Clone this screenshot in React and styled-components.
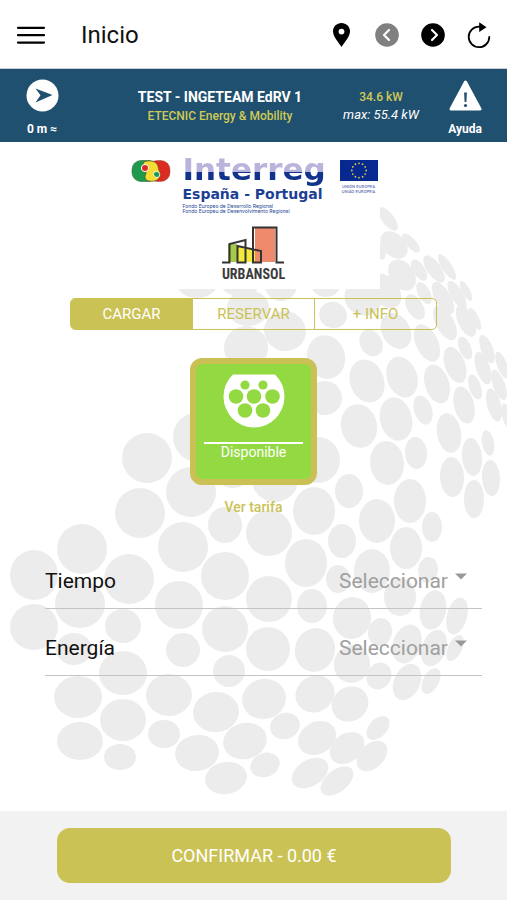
import React, { useState } from "react";
import styled, { createGlobalStyle } from "styled-components";

const GlobalStyle = createGlobalStyle`
  * {
    box-sizing: border-box;
  }
  body {
    margin: 0;
    background: #fff;
    font-family: Roboto, "Liberation Sans", sans-serif;
  }
  button,
  select {
    font-family: inherit;
  }
`;

const Page = styled.div`
  display: flex;
  flex-direction: column;
  min-height: 100vh;
`;

const Header = styled.header`
  display: flex;
  align-items: center;
  height: 69px;
  padding: 2px 16px 0 16px;
  border-bottom: 1px solid #c9ced2;
`;

const IconButton = styled.button`
  display: flex;
  justify-content: center;
  min-width: 24px;
  padding: 0;
  border: none;
  background: none;
  cursor: pointer;
`;

const PageTitle = styled.h1`
  flex: 1;
  margin: 0 0 0 35px;
  font-size: 24px;
  font-weight: 400;
  color: #111;
`;

const Actions = styled.div`
  display: flex;
  align-items: center;
  gap: 22px;
`;

const Banner = styled.section`
  display: flex;
  justify-content: space-between;
  height: 73px;
  padding: 10px 24px 0 24px;
  background: #20506f;
  color: #fff;
`;

const BannerAction = styled.button`
  display: flex;
  flex-direction: column;
  align-items: center;
  gap: 9px;
  width: 36px;
  padding: 0;
  border: none;
  background: none;
  color: #fff;
  font-size: 12px;
  font-weight: 700;
  line-height: 16px;
  white-space: nowrap;
  cursor: pointer;
`;

const Station = styled.div`
  flex: 1;
  padding: 8px 0 0 38px;
  text-align: center;
`;

const StationName = styled.div`
  font-size: 14px;
  font-weight: 700;
  line-height: 20px;
`;

const Operator = styled.div`
  font-size: 12px;
  font-weight: 500;
  line-height: 18px;
  color: #cfca55;
`;

const Power = styled.div`
  width: 78px;
  margin-right: 27px;
  padding-top: 9px;
  text-align: center;
  white-space: nowrap;
`;

const PowerNow = styled.div`
  font-size: 12px;
  font-weight: 500;
  line-height: 18px;
  color: #cfca55;
`;

const PowerMax = styled.div`
  font-size: 13px;
  font-style: italic;
  line-height: 17px;
`;

const Main = styled.main`
  position: relative;
  flex: 1;
  overflow: hidden;
`;

const Backdrop = styled.svg`
  position: absolute;
  top: 0;
  left: 0;
  width: 100%;
  fill: #ececec;
`;

const Content = styled.div`
  position: relative;
  display: flex;
  flex-direction: column;
  align-items: center;
`;

const Logos = styled.div`
  display: flex;
  flex-direction: column;
  align-items: center;
  width: 252px;
  height: 147px;
  padding-top: 17px;
  background: #fff;
`;

const Interreg = styled.div`
  display: flex;
  align-items: flex-start;
  justify-content: space-between;
  width: 100%;
  height: 66px;
  padding: 0 2px 0 3px;
`;

const InterregText = styled.div`
  width: 145px;
  font-family: "DejaVu Sans", sans-serif;
  color: #1c3f94;
  white-space: nowrap;
`;

const InterregName = styled.div`
  margin: -5px 0 -2px 0;
  padding-bottom: 4px;
  font-size: 31px;
  font-weight: 700;
  line-height: 30px;
  background: linear-gradient(#b9b4dc 18px, #12338c 18px);
  background-clip: text;
  -webkit-background-clip: text;
  color: transparent;
`;

const InterregArea = styled.div`
  font-size: 14px;
  font-weight: 700;
  line-height: 16px;
`;

const InterregFund = styled.div`
  margin-top: 2px;
  font-family: Inter, sans-serif;
  font-size: 5px;
  line-height: 5px;
`;

const Europe = styled.div`
  width: 38px;
  padding-top: 1px;
  font-family: Inter, sans-serif;
  font-size: 4px;
  font-weight: 500;
  line-height: 5px;
  color: #5a6cad;
  text-align: center;
  white-space: nowrap;

  svg {
    display: block;
    margin-bottom: 3px;
  }
`;

const Urbansol = styled.div`
  display: flex;
  flex-direction: column;
  align-items: center;
  font-family: "Liberation Sans Narrow", "Roboto Condensed", "Open Sans Condensed", Roboto, sans-serif;
  font-size: 14px;
  font-weight: 700;
  line-height: 18px;
  color: #3c3c3c;
`;

const Tabs = styled.div`
  display: flex;
  align-self: stretch;
  height: 32px;
  margin: 9px 70px 0 70px;
  border: 1px solid #cbc255;
  border-radius: 5px;
  overflow: hidden;
`;

const Tab = styled.button`
  flex: 1;
  padding: 0;
  border: none;
  border-left: ${(props) => (props.$first ? "none" : "1px solid #cbc255")};
  background: ${(props) => (props.$active ? "#cbc255" : "transparent")};
  color: ${(props) => (props.$active ? "#fff" : "#cbc255")};
  font-size: 15px;
  cursor: pointer;
`;

const Connector = styled.button`
  display: flex;
  flex-direction: column;
  align-items: center;
  width: 127px;
  height: 127px;
  margin-top: 28px;
  padding: 10px 8px 0 8px;
  border: 6px solid #cbc055;
  border-radius: 12px;
  background: #93d942;
  color: #fff;
  cursor: pointer;
`;

const ConnectorState = styled.span`
  width: 100%;
  margin-top: 14px;
  border-top: 2px solid #fff;
  font-size: 14px;
  line-height: 17px;
`;

const RateLink = styled.a`
  margin-top: 12px;
  font-size: 14px;
  font-weight: 500;
  line-height: 20px;
  color: #cbc255;
  text-decoration: none;
`;

const Form = styled.div`
  align-self: stretch;
  margin: 25px 25px 0 45px;
`;

const Row = styled.div`
  display: flex;
  align-items: center;
  height: 67px;
  padding: 12px 15px 0 0;
  border-bottom: 1px solid #c4c4c4;
`;

const Label = styled.label`
  flex: 1;
  font-size: 21px;
  color: #111;
`;

const Select = styled.select`
  appearance: none;
  width: 116px;
  padding: 0;
  border: none;
  background: none;
  font-size: 21px;
  color: #a0a0a0;
  text-align-last: right;
`;

const Caret = styled.svg`
  margin: 0 0 10px 7px;
`;

const Footer = styled.footer`
  display: flex;
  height: 89px;
  padding: 17px 56px 17px 57px;
  background: #f2f2f2;
`;

const ConfirmButton = styled.button`
  flex: 1;
  border: none;
  border-radius: 13px;
  background: #cbc255;
  color: #fff;
  font-size: 18px;
  cursor: pointer;
`;

// cx, cy, rx, ry, rotation
const dots = [
  [197, 284, 20, 14, 0], [240, 286, 18, 10, 0], [281, 285, 16, 16, 0], [326, 283, 15, 14, 0],
  [248, 308, 21, 18, 0], [363, 298, 19, 17, 30], [333, 315, 14, 13, 25], [246, 348, 22, 22, 0],
  [285, 331, 21, 20, 20], [388, 219, 6, 14, -38], [394, 245, 11, 16, -45], [411, 243, 5, 12, -42],
  [380, 251, 5, 9, -20], [402, 275, 12, 17, -35], [419, 270, 6, 12, -33], [434, 269, 7, 16, -35],
  [447, 267, 5, 15, -33], [386, 291, 13, 19, -35], [424, 293, 6, 12, -28], [443, 298, 8, 18, -30],
  [457, 295, 6, 16, -30], [466, 291, 4, 11, -28], [415, 307, 8, 14, -30], [371, 343, 11, 14, -30],
  [396, 331, 14, 19, -30], [427, 343, 11, 20, -25], [445, 323, 9, 19, -28], [466, 321, 8, 17, -25],
  [475, 319, 4, 12, -25], [465, 348, 6, 12, -22], [455, 365, 10, 19, -20], [487, 349, 6, 15, -22],
  [483, 368, 7, 17, -18], [502, 365, 5, 14, -20], [499, 385, 6, 16, -20], [475, 387, 6, 13, -18],
  [437, 384, 12, 20, -18], [402, 377, 15, 21, -20], [367, 381, 17, 22, -20], [326, 357, 19, 22, -15],
  [325, 398, 17, 17, 0], [359, 426, 18, 22, -12], [396, 419, 16, 22, -14], [423, 410, 9, 15, -18],
  [464, 405, 10, 19, -14], [494, 405, 7, 17, -15], [506, 415, 4, 12, -10], [449, 433, 12, 20, -10],
  [416, 453, 11, 16, -5], [387, 463, 17, 22, -5], [472, 457, 10, 19, -6], [488, 443, 6, 13, -10],
  [491, 478, 9, 18, -3], [452, 477, 12, 20, -3], [474, 499, 10, 19, 0], [410, 501, 16, 22, 0],
  [349, 491, 14, 17, 0], [318, 460, 22, 23, 0], [314, 511, 21, 24, 0], [377, 521, 18, 22, 0],
  [432, 527, 10, 15, 0], [342, 541, 14, 17, 0], [406, 548, 16, 21, 0], [275, 480, 23, 22, 0],
  [233, 474, 16, 14, 0], [147, 458, 25, 25, 0], [198, 437, 25, 25, 0], [191, 492, 25, 25, 0],
  [140, 513, 25, 25, 0], [82, 549, 25, 25, 0], [34, 575, 24, 25, 0], [129, 579, 25, 25, 0],
  [183, 547, 25, 25, 0], [225, 525, 17, 18, 0], [225, 576, 24, 24, 0], [179, 605, 24, 24, 0],
  [80, 604, 25, 24, 0], [34, 627, 24, 23, 0], [123, 626, 18, 17, 0], [74, 649, 18, 16, 0],
  [183, 650, 17, 17, 0], [225, 629, 23, 23, 0], [229, 671, 16, 16, 0], [123, 673, 24, 22, 0],
  [78, 697, 24, 21, 0], [169, 695, 23, 21, 0], [123, 720, 23, 21, 0], [216, 712, 23, 20, -5],
  [164, 734, 16, 14, 0], [80, 741, 23, 19, 0], [120, 757, 16, 13, 0], [197, 753, 22, 18, -8],
  [245, 741, 22, 18, -15], [226, 778, 21, 16, -10], [265, 765, 15, 12, -20], [269, 533, 23, 23, 0],
  [306, 563, 21, 24, 0], [269, 599, 23, 23, 0], [338, 579, 12, 14, 0], [372, 571, 18, 22, 0],
  [400, 597, 16, 19, 0], [428, 570, 10, 13, 5], [312, 606, 15, 17, 0], [352, 618, 19, 21, 8],
  [433, 610, 13, 20, 12], [457, 616, 10, 19, 15], [380, 632, 12, 14, 15], [407, 644, 14, 20, 20],
  [434, 648, 12, 19, 20], [455, 648, 7, 14, 25], [268, 649, 22, 22, 0], [315, 650, 20, 22, 15],
  [352, 664, 18, 19, 20], [264, 699, 22, 20, -15], [315, 694, 20, 18, -30], [350, 704, 19, 17, -35],
  [379, 676, 12, 14, 30], [407, 682, 13, 19, 25], [431, 681, 8, 14, 28], [285, 726, 15, 13, -20],
  [317, 738, 20, 16, -30], [347, 748, 19, 14, -38], [378, 728, 14, 9, -48], [372, 756, 18, 12, -45],
  [310, 773, 20, 13, -32], [337, 781, 19, 11, -38],
];

const MenuIcon = () => (
  <svg width="30" height="20" viewBox="0 0 30 20" stroke="#000" strokeWidth="2.2" strokeLinecap="round">
    <path d="M2 2.800h26M2 10.200h26M2 17.600h26" />
  </svg>
);

const PinIcon = () => (
  <svg width="17" height="24" viewBox="0 0 17 24">
    <path
      fillRule="evenodd"
      d="M8.500 0C3.800 0 0 3.600 0 8.200 0 13.700 5.800 19.500 8.500 24 11.200 19.500 17 13.700 17 8.200 17 3.600 13.200 0 8.500 0zM8.500 5.700a2.900 2.900 0 1 1 0 5.800 2.900 2.900 0 0 1 0-5.800z"
    />
  </svg>
);

const ArrowIcon = ({ color, path }) => (
  <svg width="24" height="24" viewBox="0 0 24 24">
    <circle cx="12" cy="12" r="11.800" fill={color} />
    <path d={path} fill="none" stroke="#fff" strokeWidth="2.200" strokeLinecap="round" strokeLinejoin="round" />
  </svg>
);

const ReloadIcon = () => (
  <svg width="24" height="27" viewBox="0 0 24 27">
    <path d="M14 4.600H12A10.300 10.300 0 1 0 22.300 15" fill="none" stroke="#000" strokeWidth="1.800" strokeLinecap="round" />
    <path d="M12.200 0.300V10L19.500 5.200z" />
  </svg>
);

const CompassIcon = () => (
  <svg width="33" height="33" viewBox="0 0 33 33">
    <circle cx="16.500" cy="16.500" r="16" fill="#fff" />
    <path d="M9.500 9.500L26.500 16 9.500 23.500 14.500 16.200z" fill="#20506f" />
  </svg>
);

const WarningIcon = () => (
  <svg width="33" height="33" viewBox="0 0 33 33">
    <path d="M16.500 3L31 30H2z" fill="#fff" stroke="#fff" strokeWidth="3" strokeLinejoin="round" />
    <path d="M15.100 13.500h2.800l-.5 9.500h-1.800z" fill="#20506f" />
    <circle cx="16.500" cy="26.500" r="1.600" fill="#20506f" />
  </svg>
);

const InterregEmblem = () => (
  <svg width="40" height="24" viewBox="0 0 40 24">
    <rect x="1" y="1.500" width="26" height="21" rx="9" fill="#1f9a4c" stroke="#2f6a3a" strokeWidth="0.600" />
    <rect x="17" y="1.500" width="22" height="21" rx="9" fill="#dc2b22" stroke="#7a3a22" strokeWidth="0.400" />
    <path
      d="M13 3c3-1.500 9-1.500 12 1 2.500 2.200 2 5 3 7.500 2 3.500 1 8.500-3 10-3.500 1.200-9 1-10.500-1.500-1.500-3 1.300-5 .5-8-.8-3-4-5.500-2-9z"
      fill="#f5dd33"
      stroke="#514a20"
      strokeWidth="0.600"
    />
    <circle cx="14" cy="9" r="3.600" fill="#dc2b22" stroke="#fff" strokeWidth="1" />
    <path d="M23 13.500c1.500-1.500 4.500-1.300 5.500.7s-.5 4.300-2.500 4.300-4.700-3-3-5z" fill="#1f9a4c" stroke="#fff" strokeWidth="0.900" />
  </svg>
);

const EuropeFlag = () => (
  <svg width="38" height="21" viewBox="0 0 38 21">
    <rect width="38" height="21" fill="#07288f" />
    {Array.from({ length: 12 }, (_, i) => (
      <circle
        key={i}
        cx={19 + 7.2 * Math.sin((i * Math.PI) / 6)}
        cy={10.5 - 7.2 * Math.cos((i * Math.PI) / 6)}
        r="0.900"
        fill="#d5cf3c"
      />
    ))}
  </svg>
);

const UrbansolIcon = () => (
  <svg width="62" height="40" viewBox="0 0 62 40">
    <path d="M6 19h9v18H6z" fill="#a6c94b" />
    <path d="M15 21l24 5v11H15z" fill="#f3ea3e" />
    <path d="M33 3h20v34H33z" fill="#ef8b6c" />
    <path
      d="M0 37.500h7.500V19l16-4v22.500H15.500V21L39 26v11.500h-8V2.500h23.500v35H62"
      fill="none"
      stroke="#333"
      strokeWidth="2"
    />
  </svg>
);

const SocketIcon = () => (
  <svg width="62" height="54" viewBox="0 0 62 54">
    <path d="M10 0.500H52A31 31 0 0 1 61.500 22.500 30.500 31 0 0 1 0.500 22.500 31 31 0 0 1 10 0.500z" fill="#fff" />
    <g fill="#93d942">
      <circle cx="22" cy="11" r="4.600" />
      <circle cx="40" cy="11" r="4.600" />
      <circle cx="13" cy="22.500" r="7.300" />
      <circle cx="31" cy="22.500" r="7.300" />
      <circle cx="49.500" cy="22.500" r="7.300" />
      <circle cx="22" cy="36.500" r="7.300" />
      <circle cx="40" cy="36.500" r="7.300" />
    </g>
  </svg>
);

const tabs = ["CARGAR", "RESERVAR", "+ INFO"];

const fields = [
  { id: "tiempo", label: "Tiempo" },
  { id: "energia", label: "Energía" },
];

const App = () => {
  const [active, setActive] = useState(0);

  return (
    <Page>
      <GlobalStyle />
      <Header>
        <IconButton aria-label="Menú">
          <MenuIcon />
        </IconButton>
        <PageTitle>Inicio</PageTitle>
        <Actions>
          <IconButton aria-label="Mapa">
            <PinIcon />
          </IconButton>
          <IconButton aria-label="Anterior">
            <ArrowIcon color="#808080" path="M14 7l-5 5 5 5" />
          </IconButton>
          <IconButton aria-label="Siguiente">
            <ArrowIcon color="#000" path="M11 7l5 5-5 5" />
          </IconButton>
          <IconButton aria-label="Actualizar">
            <ReloadIcon />
          </IconButton>
        </Actions>
      </Header>
      <Banner>
        <BannerAction>
          <CompassIcon />
          0 m ≈
        </BannerAction>
        <Station>
          <StationName>TEST - INGETEAM EdRV 1</StationName>
          <Operator>ETECNIC Energy &amp; Mobility</Operator>
        </Station>
        <Power>
          <PowerNow>34.6 kW</PowerNow>
          <PowerMax>max: 55.4 kW</PowerMax>
        </Power>
        <BannerAction>
          <WarningIcon />
          Ayuda
        </BannerAction>
      </Banner>
      <Main>
        <Backdrop viewBox="0 142 507 669" aria-hidden="true">
          {dots.map(([cx, cy, rx, ry, angle]) => (
            <ellipse key={`${cx}-${cy}`} cx={cx} cy={cy} rx={rx} ry={ry} transform={`rotate(${angle} ${cx} ${cy})`} />
          ))}
        </Backdrop>
        <Content>
          <Logos>
            <Interreg>
              <InterregEmblem />
              <InterregText>
                <InterregName>Interreg</InterregName>
                <InterregArea>España - Portugal</InterregArea>
                <InterregFund>
                  Fondo Europeo de Desarrollo Regional
                  <br />
                  Fondo Europeu de Desenvolvimento Regional
                </InterregFund>
              </InterregText>
              <Europe>
                <EuropeFlag />
                UNIÓN EUROPEA
                <br />
                UNIÃO EUROPEIA
              </Europe>
            </Interreg>
            <Urbansol>
              <UrbansolIcon />
              URBANSOL
            </Urbansol>
          </Logos>
          <Tabs role="tablist">
            {tabs.map((name, i) => (
              <Tab
                key={name}
                role="tab"
                aria-selected={i === active}
                $first={i === 0}
                $active={i === active}
                onClick={() => setActive(i)}
              >
                {name}
              </Tab>
            ))}
          </Tabs>
          <Connector>
            <SocketIcon />
            <ConnectorState>Disponible</ConnectorState>
          </Connector>
          <RateLink href="#tarifa">Ver tarifa</RateLink>
          <Form>
            {fields.map((field) => (
              <Row key={field.id}>
                <Label htmlFor={field.id}>{field.label}</Label>
                <Select id={field.id}>
                  <option>Seleccionar</option>
                </Select>
                <Caret width="12" height="7" viewBox="0 0 12 7">
                  <path d="M0 0.500h12L6 6.500z" fill="#999" />
                </Caret>
              </Row>
            ))}
          </Form>
        </Content>
      </Main>
      <Footer>
        <ConfirmButton>CONFIRMAR - 0.00 €</ConfirmButton>
      </Footer>
    </Page>
  );
};

export default App;
